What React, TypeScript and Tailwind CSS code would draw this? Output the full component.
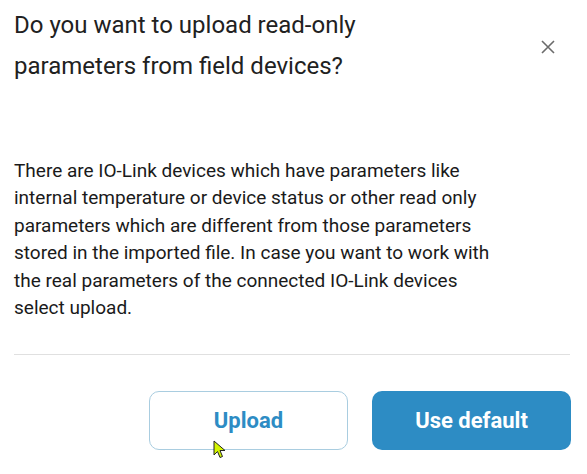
import React from "react";

export default function App() {
  return (
    <div className="relative w-[587px] h-[474px] bg-white overflow-hidden" style={{ fontFamily: "Roboto, 'Liberation Sans', sans-serif" }}>
      <div className="flex flex-col pl-[14px] pr-[15px] pt-[5px]">
        <div className="flex items-start justify-between">
          <h1 className="text-[24px] leading-[41px] text-[#212121] font-normal w-[420px]">
            Do you want to upload read-only parameters from field devices?
          </h1>
          <button className="mt-[34px] mr-[16px] w-[16px] h-[16px] flex items-center justify-center text-[#666]">
            <svg width="14" height="14" viewBox="0 0 14 14">
              <path d="M1 1 L13 13 M13 1 L1 13" stroke="#6b6b6b" strokeWidth="1.6" />
            </svg>
          </button>
        </div>
        <p className="mt-[70px] text-[19px] leading-[27.4px] text-[#1a1a1a] w-[490px]">
          There are IO-Link devices which have parameters like internal temperature or device status or other read only parameters which are different from those parameters stored in the imported file. In case you want to work with the real parameters of the connected IO-Link devices select upload.
        </p>
        <div className="mt-[33px] h-px bg-[#e0e0e0] mr-[2px]" />
        <div className="mt-[36px] flex justify-end gap-[24px] pr-[1px]">
          <button className="w-[199px] h-[59px] rounded-[10px] border border-[#a9cde0] bg-white text-[#2d8cc4] text-[22px] font-bold">
            Upload
          </button>
          <button className="w-[199px] h-[59px] rounded-[10px] bg-[#2d8cc4] text-white text-[22px] font-bold">
            Use default
          </button>
        </div>
      </div>
      <svg className="absolute left-[213px] top-[440px]" width="14" height="20" viewBox="0 0 14 20">
        <path d="M1 1 L1 15 L4.5 11.5 L7 17.5 L9.5 16.5 L7 10.5 L12 10.5 Z" fill="#d4f500" stroke="#222" strokeWidth="1" />
      </svg>
    </div>
  );
}
